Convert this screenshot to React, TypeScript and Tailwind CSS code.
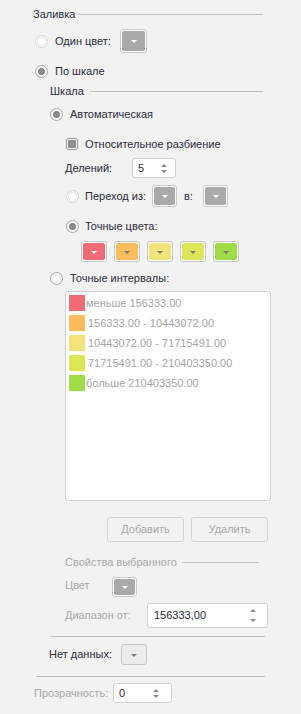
import React from 'react';

const swatches = [
    { color: 'bg-[#f06b75]', label: 'меньше 156333.00', pad: 'pl-[1px]' },
    { color: 'bg-[#fbbc5c]', label: '156333.00 - 10443072.00', pad: 'pl-[3px]' },
    { color: 'bg-[#f3e379]', label: '10443072.00 - 71715491.00', pad: 'pl-[3px]' },
    { color: 'bg-[#dce657]', label: '71715491.00 - 210403350.00', pad: 'pl-[3px]' },
    { color: 'bg-[#9fdc47]', label: 'больше 210403350.00', pad: 'pl-[1px]' },
];

function Radio({ on, faint }: { on?: boolean; faint?: boolean }) {
    return (
        <span
            className={
                'w-[13px] h-[13px] rounded-full border flex items-center justify-center shrink-0 ' +
                (faint ? 'border-[#d4d4d4] bg-[#fafafa]' : 'border-[#a8a8a8] bg-[#f7f7f7]')
            }
        >
            {on && <span className="w-[7px] h-[7px] rounded-full bg-[#8c8c8c] border border-[#737373]" />}
            {!on && <span className="w-[9px] h-[9px] rounded-full border border-[#e6e6e6] bg-white" />}
        </span>
    );
}

function Arrow({ white }: { white?: boolean }) {
    return (
        <span
            className={
                'w-0 h-0 border-l-[3px] border-r-[3px] border-t-[3px] border-l-transparent border-r-transparent mt-[1px] ' +
                (white ? 'border-t-white' : 'border-t-[#7a7a7a]')
            }
        />
    );
}

function ColorBtn({ fill, white, size }: { fill: string; white?: boolean; size: string }) {
    return (
        <div className={'rounded-[3px] border border-[#c9c9c9] bg-[#fbfbfb] p-[1px] flex shrink-0 ' + size}>
            <div className={'flex-1 rounded-[2px] flex items-center justify-center ' + fill}>
                <Arrow white={white} />
            </div>
        </div>
    );
}

function Spin() {
    return (
        <div className="flex flex-col items-center gap-[3px]">
            <span className="w-0 h-0 border-l-[3px] border-r-[3px] border-b-[3px] border-l-transparent border-r-transparent border-b-[#8a8a8a]" />
            <span className="w-0 h-0 border-l-[3px] border-r-[3px] border-t-[3px] border-l-transparent border-r-transparent border-t-[#8a8a8a]" />
        </div>
    );
}

function Line({ className }: { className: string }) {
    return <div className={'h-px bg-[#c2c2c2] ' + className} />;
}

export default function App() {
    return (
        <div className="w-[301px] h-[714px] bg-[#f2f2f2] text-[11px] text-[#2b2b3b] font-['Liberation_Sans',Arial,sans-serif] flex flex-col overflow-hidden">
            {/* Заливка */}
            <div className="mt-[4px] h-[20px] flex items-center pl-[33px] pr-[38px]">
                <span>Заливка</span>
                <Line className="flex-1 ml-[3px]" />
            </div>

            <div className="mt-[5px] h-[24px] flex items-center pl-[35px]">
                <Radio faint />
                <span className="ml-[7px] w-[65px]">Один цвет:</span>
                <ColorBtn fill="bg-[#a9a9a9]" white size="w-[27px] h-[24px]" />
            </div>

            <div className="mt-[8px] h-[20px] flex items-center pl-[35px]">
                <Radio on />
                <span className="ml-[7px]">По шкале</span>
            </div>

            {/* Шкала */}
            <div className="h-[20px] flex items-center pl-[50px] pr-[38px]">
                <span>Шкала</span>
                <Line className="flex-1 ml-[6px]" />
            </div>

            <div className="mt-[3px] h-[20px] flex items-center pl-[50px]">
                <Radio on />
                <span className="ml-[7px]">Автоматическая</span>
            </div>

            <div className="mt-[10px] h-[20px] flex items-center pl-[66px]">
                <span className="w-[12px] h-[12px] rounded-[2px] border border-[#9d9d9d] bg-[#f4f4f4] flex items-center justify-center shrink-0">
                    <span className="w-[8px] h-[8px] rounded-[1px] bg-[#8f8f8f]" />
                </span>
                <span className="ml-[7px]">Относительное разбиение</span>
            </div>

            <div className="mt-[4px] h-[20px] flex items-center pl-[65px]">
                <span className="w-[67px]">Делений:</span>
                <div className="w-[44px] h-[20px] bg-white border border-[#d2d2d2] rounded-[3px] flex items-center pl-[5px] pr-[8px]">
                    <span className="flex-1">5</span>
                    <Spin />
                </div>
            </div>

            <div className="mt-[7px] h-[22px] flex items-center pl-[66px]">
                <Radio faint />
                <span className="ml-[6px] w-[67px]">Переход из:</span>
                <ColorBtn fill="bg-[#a9a9a9]" white size="w-[25px] h-[22px]" />
                <span className="ml-[7px] w-[19px]">в:</span>
                <ColorBtn fill="bg-[#a9a9a9]" white size="w-[25px] h-[22px]" />
            </div>

            <div className="mt-[9px] h-[20px] flex items-center pl-[66px]">
                <Radio on />
                <span className="ml-[6px]">Точные цвета:</span>
            </div>

            <div className="mt-[5px] h-[21px] flex items-center gap-[7px] pl-[81px]">
                <ColorBtn fill="bg-[#f06b75]" white size="w-[26px] h-[21px]" />
                <ColorBtn fill="bg-[#fbbc5c]" size="w-[26px] h-[21px]" />
                <ColorBtn fill="bg-[#f3e379]" size="w-[26px] h-[21px]" />
                <ColorBtn fill="bg-[#dce657]" size="w-[26px] h-[21px]" />
                <ColorBtn fill="bg-[#9fdc47]" size="w-[26px] h-[21px]" />
            </div>

            <div className="mt-[6px] h-[20px] flex items-center pl-[50px]">
                <Radio />
                <span className="ml-[7px]">Точные интервалы:</span>
            </div>

            {/* Интервалы */}
            <div className="mt-[3px] ml-[65px] w-[206px] h-[210px] bg-white border border-[#d0d0d0] rounded-[3px] pt-[3px] pl-[3px] flex flex-col gap-[4px]">
                {swatches.map((s) => (
                    <div key={s.label} className="h-[16px] flex items-center">
                        <span className={'w-[16px] h-[16px] shrink-0 ' + s.color} />
                        <span className={'text-[#a6a6a6] whitespace-nowrap ' + s.pad}>{s.label}</span>
                    </div>
                ))}
            </div>

            <div className="mt-[16px] h-[25px] flex gap-[7px] pl-[107px]">
                <button className="w-[77px] h-[25px] rounded-[3px] border border-[#d4d4d4] text-[#a8a8a8]">Добавить</button>
                <button className="w-[77px] h-[25px] rounded-[3px] border border-[#d4d4d4] text-[#a8a8a8]">Удалить</button>
            </div>

            {/* Свойства выбранного */}
            <div className="mt-[10px] h-[20px] flex items-center pl-[65px] pr-[42px]">
                <span className="text-[#a8a8a8]">Свойства выбранного</span>
                <Line className="flex-1 ml-[5px]" />
            </div>

            <div className="mt-[5px] h-[20px] flex items-start pl-[65px]">
                <span className="w-[47px] leading-[14px] mt-[1px] text-[#a8a8a8]">Цвет</span>
                <ColorBtn fill="bg-[#a9a9a9]" white size="w-[25px] h-[20px]" />
            </div>

            <div className="mt-[6px] h-[25px] flex items-center pl-[65px]">
                <span className="w-[82px] text-[#a8a8a8]">Диапазон от:</span>
                <div className="w-[121px] h-[25px] bg-white border border-[#d2d2d2] rounded-[3px] flex items-center pl-[6px] pr-[11px]">
                    <span className="flex-1">156333,00</span>
                    <div className="flex flex-col items-center gap-[7px]">
                        <span className="w-0 h-0 border-l-[3px] border-r-[3px] border-b-[3px] border-l-transparent border-r-transparent border-b-[#8a8a8a]" />
                        <span className="w-0 h-0 border-l-[3px] border-r-[3px] border-t-[3px] border-l-transparent border-r-transparent border-t-[#8a8a8a]" />
                    </div>
                </div>
            </div>

            <Line className="mt-[8px] ml-[51px] w-[214px]" />

            <div className="mt-[7px] h-[21px] flex items-center pl-[49px]">
                <span className="w-[72px]">Нет данных:</span>
                <div className="w-[26px] h-[21px] rounded-[3px] border border-[#c6c6c6] bg-[#ececec] flex items-center justify-center">
                    <Arrow />
                </div>
            </div>

            <Line className="mt-[11px] ml-[36px] w-[229px]" />

            <div className="mt-[6px] h-[20px] flex items-center pl-[34px]">
                <span className="w-[79px] text-[#a8a8a8]">Прозрачность:</span>
                <div className="w-[59px] h-[20px] bg-white border border-[#d2d2d2] rounded-[3px] flex items-center pl-[5px] pr-[12px]">
                    <span className="flex-1">0</span>
                    <Spin />
                </div>
            </div>
        </div>
    );
}
